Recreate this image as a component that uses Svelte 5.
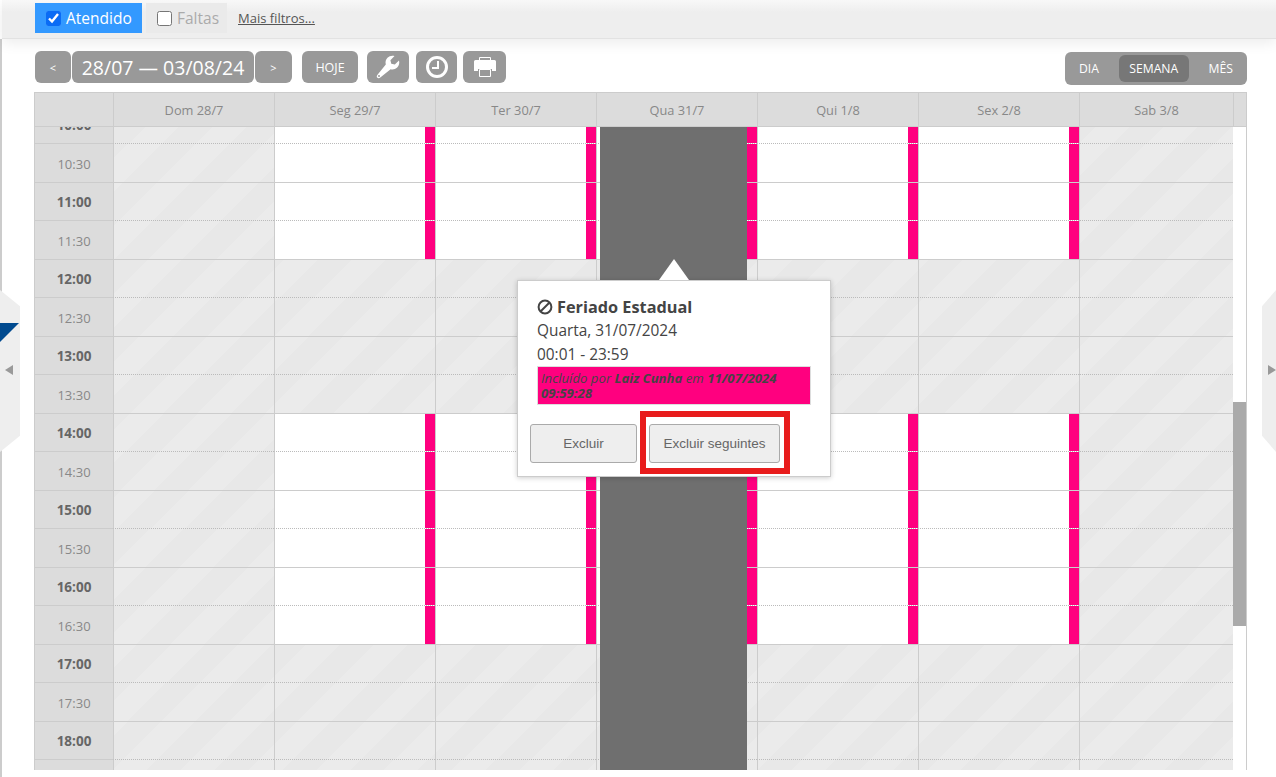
<script>
	const days = [
		{ label: 'Dom 28/7', open: false },
		{ label: 'Seg 29/7', open: true },
		{ label: 'Ter 30/7', open: true },
		{ label: 'Qua 31/7', open: true, holiday: true },
		{ label: 'Qui 1/8', open: true },
		{ label: 'Sex 2/8', open: true },
		{ label: 'Sab 3/8', open: false }
	];

	const slots = [];
	for (let h = 10; h <= 18; h++) {
		slots.push({ time: `${h}:00`, full: true, open: isOpen(h) });
		slots.push({ time: `${h}:30`, full: false, open: isOpen(h) });
	}

	function isOpen(h) {
		return (h >= 10 && h < 12) || (h >= 14 && h < 17);
	}
</script>

<div class="page">
	<div class="filters">
		<label class="check on"><input type="checkbox" checked /> Atendido</label>
		<label class="check off"><input type="checkbox" /> Faltas</label>
		<a class="more" href="#top">Mais filtros...</a>
	</div>

	<div class="toolbar">
		<button class="btn nav">&lt;</button>
		<button class="btn range">28/07 — 03/08/24</button>
		<button class="btn nav next">&gt;</button>
		<button class="btn today">HOJE</button>
		<button class="btn icon wrench" aria-label="Ferramentas">
			<svg width="24" height="24" viewBox="0 0 24 24">
				<path fill="#fff" d="M23 5.500 18.800 9.600 15.300 8.700 14.400 5.200 18.500 1.100C16 .3 13.300 1 11.500 2.800 9.700 4.600 9.200 7.100 9.800 9.400L1.500 19.700C.5 20.900.6 22 1.400 22.700 2.200 23.400 3.300 23.400 4.300 22.500L14.600 14.200C16.900 14.800 19.400 14.300 21.200 12.500 23 10.700 23.700 8 23 5.500Z" />
				<circle cx="3" cy="21" r="1" fill="#999" />
			</svg>
		</button>
		<button class="btn icon clock" aria-label="Horário">
			<svg width="24" height="24" viewBox="0 0 24 24">
				<circle cx="12" cy="12" r="9.500" fill="none" stroke="#fff" stroke-width="3" />
				<path fill="none" stroke="#fff" stroke-width="2" d="M13 6v7H7" />
			</svg>
		</button>
		<button class="btn icon print" aria-label="Imprimir">
			<svg width="22" height="20" viewBox="0 0 22 20">
				<path fill="none" stroke="#fff" d="M5.500.5h11v3h-11z" />
				<path fill="#fff" d="M1.500 3h19A1.500 1.500 0 0 1 22 4.500V14h-4v-2H4v2H0V4.500A1.500 1.500 0 0 1 1.500 3Z" />
				<path fill="none" stroke="#fff" d="M5.500 12.500h11v7h-11z" />
			</svg>
		</button>
		<div class="views">
			<span>DIA</span>
			<span class="current">SEMANA</span>
			<span>MÊS</span>
		</div>
	</div>

	<div class="calendar">
		<div class="row head">
			<div class="corner"></div>
			{#each days as day}
				<div class="dayname">{day.label}</div>
			{/each}
			<div class="gutter"></div>
		</div>
		<div class="viewport">
			<div class="body">
				<div class="slots">
					{#each slots as slot}
						<div class="row" class:hour={slot.full}>
							<div class="time" class:bold={slot.full}>{slot.time}</div>
							{#each days as day}
								<div class="cell" class:closed={!(day.open && slot.open)}>
									{#if day.open && slot.open}<i class="bar"></i>{/if}
								</div>
							{/each}
						</div>
					{/each}
				</div>
				<div class="holiday"></div>
			</div>
			<div class="scrollbar"><div class="thumb"></div></div>
		</div>
	</div>

	<div class="side left">
		<i class="corner-flag"></i>
		<i class="arrow"></i>
	</div>
	<div class="side right">
		<i class="arrow"></i>
	</div>

	<div class="popover">
		<i class="tip"></i>
		<h4>
			<svg width="16" height="16" viewBox="0 0 16 16">
				<circle cx="8" cy="8" r="6.400" fill="none" stroke="#444" stroke-width="2" />
				<path stroke="#444" stroke-width="2" d="M3.500 12.500l9-9" />
			</svg>
			Feriado Estadual
		</h4>
		<p>Quarta, 31/07/2024</p>
		<p>00:01 - 23:59</p>
		<div class="note">Incluído por <b>Laiz Cunha</b> em <b>11/07/2024 09:59:28</b></div>
		<div class="actions">
			<button class="action first">Excluir</button>
			<div class="highlight"><button class="action">Excluir seguintes</button></div>
		</div>
	</div>
</div>

<style>
	:global(body) {
		margin: 0;
		background: #fff;
		font-family: 'Open Sans', sans-serif;
		color: #444;
	}

	.page {
		position: relative;
		height: 777px;
		overflow: hidden;
		box-sizing: border-box;
		padding-left: 2px;
		background: linear-gradient(#ccc, #ccc) 0 39px / 2px 100% no-repeat;
	}

	.filters {
		height: 39px;
		padding: 3px 0 0 33px;
		box-sizing: border-box;
		display: flex;
		align-items: flex-start;
		background: linear-gradient(#f8f8f8, #eee 12px);
		border-bottom: 1px solid #e2e2e2;
		box-shadow: 0 4px 14px rgba(0, 0, 0, 0.08);
	}

	.check {
		display: flex;
		align-items: center;
		height: 30px;
		font-size: 15.500px;
		box-sizing: border-box;
	}

	.check input {
		width: 15px;
		height: 15px;
		margin: 0 5px 0 0;
	}

	.check.on {
		width: 107px;
		padding-left: 11px;
		background: #3399ff;
		color: #fff;
	}

	.check.on input {
		accent-color: #0a6cf5;
	}

	.check.off {
		width: 81px;
		margin-left: 4px;
		padding-left: 11px;
		color: #aaa;
		background: #eaeaea;
	}

	.more {
		font-size: 13px;
		line-height: 30px;
		color: #555;
		margin-left: 11px;
	}

	.toolbar {
		display: flex;
		align-items: flex-start;
		height: 32px;
		padding: 12px 29px 0 33px;
	}

	.btn {
		height: 32px;
		border: 0;
		border-radius: 6px;
		background: #999;
		color: #fff;
		font-family: inherit;
		padding: 0;
		display: flex;
		align-items: center;
		justify-content: center;
	}

	.nav {
		width: 36px;
		font-size: 11px;
	}

	.next {
		width: 37px;
	}

	.range {
		width: 182px;
		margin: 0 1px;
		font-size: 19.500px;
	}

	.today {
		width: 56px;
		margin-left: 10px;
		font-size: 12.500px;
	}

	.icon {
		margin-left: 9px;
		width: 42px;
	}

	.clock {
		width: 41px;
		margin-left: 7px;
	}

	.print {
		width: 43px;
		margin-left: 6px;
	}

	.views {
		margin: 1px 0 0 auto;
		width: 182px;
		height: 33px;
		box-sizing: border-box;
		background: #999;
		border-radius: 6px;
		display: flex;
		align-items: center;
		justify-content: space-between;
		padding: 0 14px;
		font-size: 12.200px;
		color: #fff;
	}

	.views .current {
		background: #777;
		border-radius: 6px;
		height: 27px;
		line-height: 27px;
		width: 70px;
		text-align: center;
	}

	.calendar {
		margin: 9px 27px 0 32px;
		width: 1213px;
	}

	.row {
		display: grid;
		grid-template-columns: 79px repeat(6, 161px) 154px;
		grid-template-rows: 100%;
		height: 38.500px;
		box-sizing: border-box;
	}

	.head {
		grid-template-columns: 79px repeat(6, 161px) 154px 13px;
		height: 35px;
		background: #dcdcdc;
		border: solid #ccc;
		border-width: 1px 1px 1px 0;
		box-shadow: inset 1px 0 0 #ccc;
	}

	.dayname,
	.gutter {
		font-size: 12.800px;
		color: #888;
		line-height: 35px;
		text-align: center;
		border-left: 1px solid #ccc;
	}

	.viewport {
		position: relative;
		height: 643px;
		overflow: hidden;
	}

	.body {
		position: relative;
		margin-top: -21.500px;
		width: 1199px;
	}

	.time {
		box-sizing: border-box;
		padding-top: 2px;
		background: #dcdcdc;
		color: #888;
		font-size: 13px;
		line-height: 37px;
		text-align: center;
		border-left: 1px solid #ccc;
		border-bottom: 1px solid #ccc;
	}

	.time.bold {
		padding-top: 1px;
		font-size: 13.500px;
		font-weight: 700;
		color: #666;
	}

	.cell {
		position: relative;
		box-sizing: border-box;
		border-left: 1px solid #ccc;
		border-bottom: 1px solid #ccc;
		background: #fff;
	}

	.hour .cell {
		border-bottom: 1px dotted #bbb;
	}

	.cell.closed {
		background: repeating-linear-gradient(135deg, #ebebeb 0 24px, #e8e8e8 24px 48px) fixed;
	}

	.bar {
		position: absolute;
		top: 0;
		right: 0;
		bottom: 0;
		width: 10px;
		background: #ff007f;
	}

	.holiday {
		position: absolute;
		top: 0;
		bottom: 0;
		left: 566px;
		width: 147px;
		background: #6f6f6f;
	}

	.scrollbar {
		position: absolute;
		top: 0;
		bottom: 0;
		right: 0;
		width: 14px;
		background: #fff;
		border-right: 1px solid #ccc;
		box-sizing: border-box;
	}

	.thumb {
		position: absolute;
		top: 275px;
		height: 224px;
		left: 0;
		right: 0;
		background: #aaa;
	}

	.side {
		position: absolute;
		top: 290px;
		height: 162px;
		background: #eee;
	}

	.side.left {
		left: 0;
		width: 20px;
		clip-path: polygon(0 0, 100% 10%, 100% 90%, 0 100%);
	}

	.side.right {
		right: 0;
		width: 14px;
		clip-path: polygon(100% 0, 0 10%, 0 90%, 100% 100%);
	}

	.corner-flag {
		position: absolute;
		left: 0;
		top: 33px;
		width: 19px;
		height: 19px;
		background: #004a8f;
		clip-path: polygon(0 0, 100% 0, 0 100%);
	}

	.arrow {
		position: absolute;
		top: 75px;
		width: 0;
		height: 0;
		border: 5px solid transparent;
	}

	.left .arrow {
		left: 5px;
		border-right: 8px solid #999;
		border-left: 0;
	}

	.right .arrow {
		left: 6px;
		border-left: 8px solid #999;
		border-right: 0;
	}

	.popover {
		position: absolute;
		left: 517px;
		top: 280px;
		width: 314px;
		height: 197px;
		box-sizing: border-box;
		background: #fff;
		border: 1px solid #ccc;
		box-shadow: 0 1px 5px rgba(0, 0, 0, 0.2);
		padding: 14px 19px 0;
		font-size: 14px;
	}

	.tip {
		position: absolute;
		left: 141px;
		top: -22px;
		width: 0;
		height: 0;
		border: 15px solid transparent;
		border-top: 0;
		border-bottom: 21px solid #fff;
	}

	h4 {
		margin: 0;
		font-size: 16.300px;
		font-weight: 700;
		line-height: 24px;
		display: flex;
		align-items: center;
		gap: 4px;
	}

	p {
		margin: 0;
		line-height: 24px;
		font-size: 15.400px;
	}

	.note {
		box-sizing: border-box;
		width: 274px;
		height: 39px;
		margin-top: -1px;
		padding: 4px 3px;
		background: #ff007f;
		border: 1px solid #ddd;
		font-size: 13.200px;
		line-height: 15px;
		font-style: italic;
	}

	.actions {
		display: flex;
		align-items: flex-start;
		margin: 6px 0 0 -7px;
	}

	.action {
		height: 39px;
		width: 131px;
		background: #eee;
		border: 1px solid #aaa;
		border-radius: 3px;
		font-family: 'Liberation Sans', sans-serif;
		font-size: 13.500px;
		color: #666;
		padding: 0;
	}

	.action.first {
		width: 107px;
		margin-top: 13px;
	}

	.highlight {
		margin-left: 3px;
		padding: 7px 4px 5px 3px;
		border: 6px solid #e81c1c;
		line-height: 0;
	}
</style>
